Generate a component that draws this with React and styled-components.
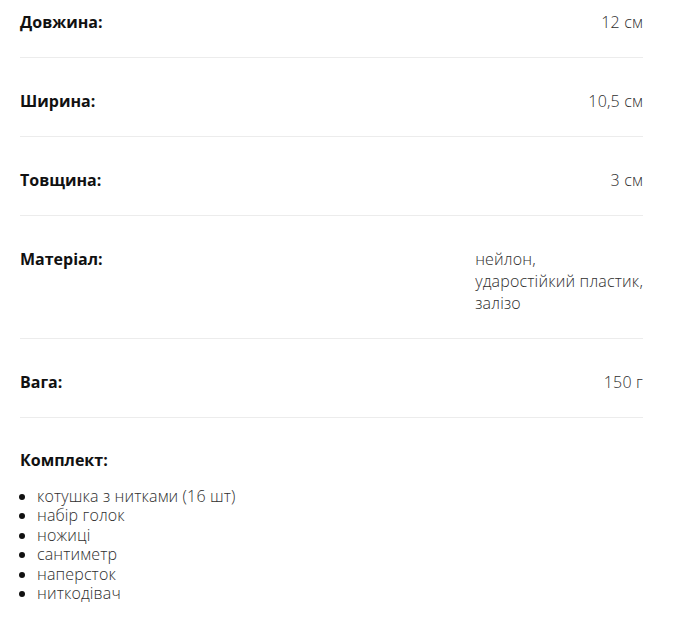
import React from 'react';
import styled, { createGlobalStyle } from 'styled-components';

const GlobalStyle = createGlobalStyle`
  body {
    margin: 0;
    background: #fff;
    font-family: 'Open Sans', 'Liberation Sans', sans-serif;
  }
`;

const Specs = styled.div`
  width: 623px;
  margin-left: 20px;
`;

const Row = styled.div`
  display: flex;
  justify-content: space-between;
  align-items: flex-start;
  padding: 32px 0 24px;
  border-bottom: 1px solid #ececec;

  &:first-child {
    padding-top: 11px;
  }
`;

const Label = styled.div`
  font-size: 16px;
  line-height: 22px;
  font-weight: 700;
  color: #111;
`;

const Value = styled.div`
  font-size: 16px;
  line-height: 22px;
  font-weight: 300;
  letter-spacing: 0.18px;
  color: #2e2e2e;
  text-align: left;
`;

const Block = styled.div`
  padding: 31px 0 0;
`;

const List = styled.ul`
  margin: 16px 0 0;
  padding-left: 17px;
  font-size: 16px;
  line-height: 19.4px;
  font-weight: 300;
  letter-spacing: 0.14px;
  color: #2e2e2e;

  li::marker {
    color: #111;
  }
`;

const specs = [
  ['Довжина:', ['12 см']],
  ['Ширина:', ['10,5 см']],
  ['Товщина:', ['3 см']],
  ['Матеріал:', ['нейлон,', 'ударостійкий пластик,', 'залізо']],
  ['Вага:', ['150 г']],
];

const kit = [
  'котушка з нитками (16 шт)',
  'набір голок',
  'ножиці',
  'сантиметр',
  'наперсток',
  'ниткодівач',
];

export default function App() {
  return (
    <>
      <GlobalStyle />
      <Specs>
        {specs.map(([label, lines]) => (
          <Row key={label}>
            <Label>{label}</Label>
            <Value>
              {lines.map((l, i) => (
                <React.Fragment key={i}>
                  {i > 0 && <br />}
                  {l}
                </React.Fragment>
              ))}
            </Value>
          </Row>
        ))}
        <Block>
          <Label>Комплект:</Label>
          <List>
            {kit.map((item) => (
              <li key={item}>{item}</li>
            ))}
          </List>
        </Block>
      </Specs>
    </>
  );
}
